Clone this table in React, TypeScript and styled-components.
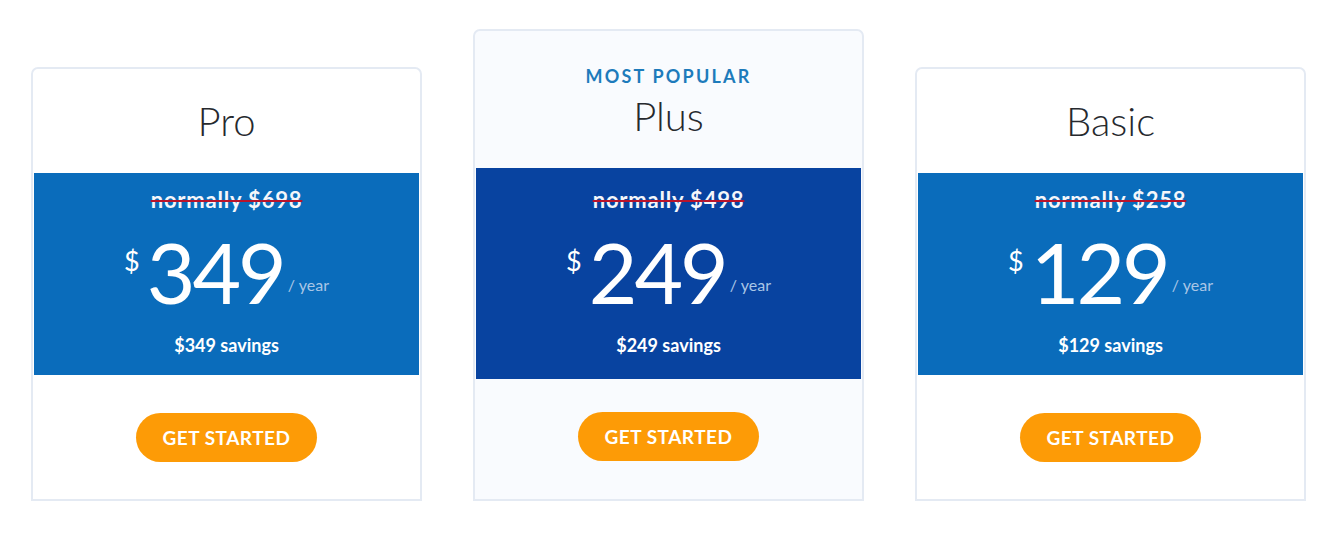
import styled, { createGlobalStyle } from 'styled-components';

const GlobalStyle = createGlobalStyle`
  html, body {
    margin: 0;
    padding: 0;
    background: #ffffff;
  }
  body {
    font-family: Lato, 'Open Sans', sans-serif;
  }
`;

const StyledPage = styled.main`
  align-items: flex-end;
  display: flex;
  gap: 51px;
  height: 501px;
  padding-left: 31px;
`;

const StyledCard = styled.section<{ featured?: boolean }>`
  background-color: ${({ featured }) => (featured ? '#f9fbfe' : '#ffffff')};
  border: 2px solid #e4eaf3;
  border-radius: 7px 7px 0 0;
  box-sizing: border-box;
  display: flex;
  flex-direction: column;
  padding: 0 1px;
  width: 391px;
`;

const StyledHeader = styled.header<{ featured?: boolean }>`
  align-items: center;
  box-sizing: border-box;
  display: flex;
  flex-direction: column;
  gap: 8px;
  height: ${({ featured }) => (featured ? '137px' : '104px')};
  justify-content: center;
  padding-top: ${({ featured }) => (featured ? '5px' : '0')};
`;

const StyledBadge = styled.span`
  color: #1d7bbb;
  font-size: 18px;
  font-weight: 700;
  letter-spacing: 2.2px;
  line-height: 20px;
`;

const StyledTitle = styled.h2`
  color: #26292e;
  font-size: 40px;
  font-weight: 300;
  line-height: 44px;
  margin: 0;
`;

const StyledBand = styled.div<{ featured?: boolean }>`
  align-items: center;
  background-color: ${({ featured }) => (featured ? '#0843a0' : '#0a6cbb')};
  color: #ffffff;
  display: flex;
  flex-direction: column;
  padding: ${({ featured }) => (featured ? '20px 0 23px' : '15px 0 19px')};
`;

const StyledNormally = styled.s`
  color: #f4f6fa;
  font-size: 22px;
  font-weight: 700;
  letter-spacing: 0.8px;
  line-height: 24px;
  text-decoration-color: #b8142c;
  text-decoration-thickness: 2px;
`;

const StyledPriceRow = styled.div`
  align-items: flex-start;
  display: flex;
  margin-top: 18px;
`;

const StyledCurrency = styled.span`
  font-size: 27px;
  font-weight: 400;
  line-height: 1;
  margin: 17px 7px 0 0;
`;

const StyledAmount = styled.span`
  font-size: 84px;
  font-weight: 400;
  letter-spacing: -3px;
  line-height: 1;
`;

const StyledPeriod = styled.span`
  color: #a9c6e6;
  font-size: 16px;
  font-weight: 400;
  line-height: 1;
  margin: 47px 0 0 4px;
`;

const StyledSavings = styled.p`
  font-size: 18px;
  font-weight: 700;
  line-height: 22px;
  margin: 20px 0 0;
`;

const StyledFooter = styled.footer<{ featured?: boolean }>`
  align-items: flex-start;
  box-sizing: border-box;
  display: flex;
  height: ${({ featured }) => (featured ? '120px' : '124px')};
  justify-content: center;
  padding-top: ${({ featured }) => (featured ? '33px' : '38px')};
`;

const StyledButton = styled.button`
  background-color: #fd9b06;
  border: none;
  border-radius: 25px;
  color: #ffffff;
  cursor: pointer;
  font-family: Lato, 'Open Sans', sans-serif;
  font-size: 19px;
  font-weight: 700;
  height: 49px;
  letter-spacing: 0.5px;
  width: 181px;
`;

type Plan = {
  name: string;
  normally: number;
  price: number;
  featured?: boolean;
};

const plans: Plan[] = [
  { name: 'Pro', normally: 698, price: 349 },
  { name: 'Plus', normally: 498, price: 249, featured: true },
  { name: 'Basic', normally: 258, price: 129 },
];

const PlanCard = ({ name, normally, price, featured }: Plan) => (
  <StyledCard featured={featured}>
    <StyledHeader featured={featured}>
      {featured && <StyledBadge>MOST POPULAR</StyledBadge>}
      <StyledTitle>{name}</StyledTitle>
    </StyledHeader>
    <StyledBand featured={featured}>
      <StyledNormally>normally ${normally}</StyledNormally>
      <StyledPriceRow>
        <StyledCurrency>$</StyledCurrency>
        <StyledAmount>{price}</StyledAmount>
        <StyledPeriod>/ year</StyledPeriod>
      </StyledPriceRow>
      <StyledSavings>${price} savings</StyledSavings>
    </StyledBand>
    <StyledFooter featured={featured}>
      <StyledButton>GET STARTED</StyledButton>
    </StyledFooter>
  </StyledCard>
);

const App = () => (
  <>
    <GlobalStyle />
    <StyledPage>
      {plans.map((plan) => (
        <PlanCard key={plan.name} {...plan} />
      ))}
    </StyledPage>
  </>
);

export default App;
